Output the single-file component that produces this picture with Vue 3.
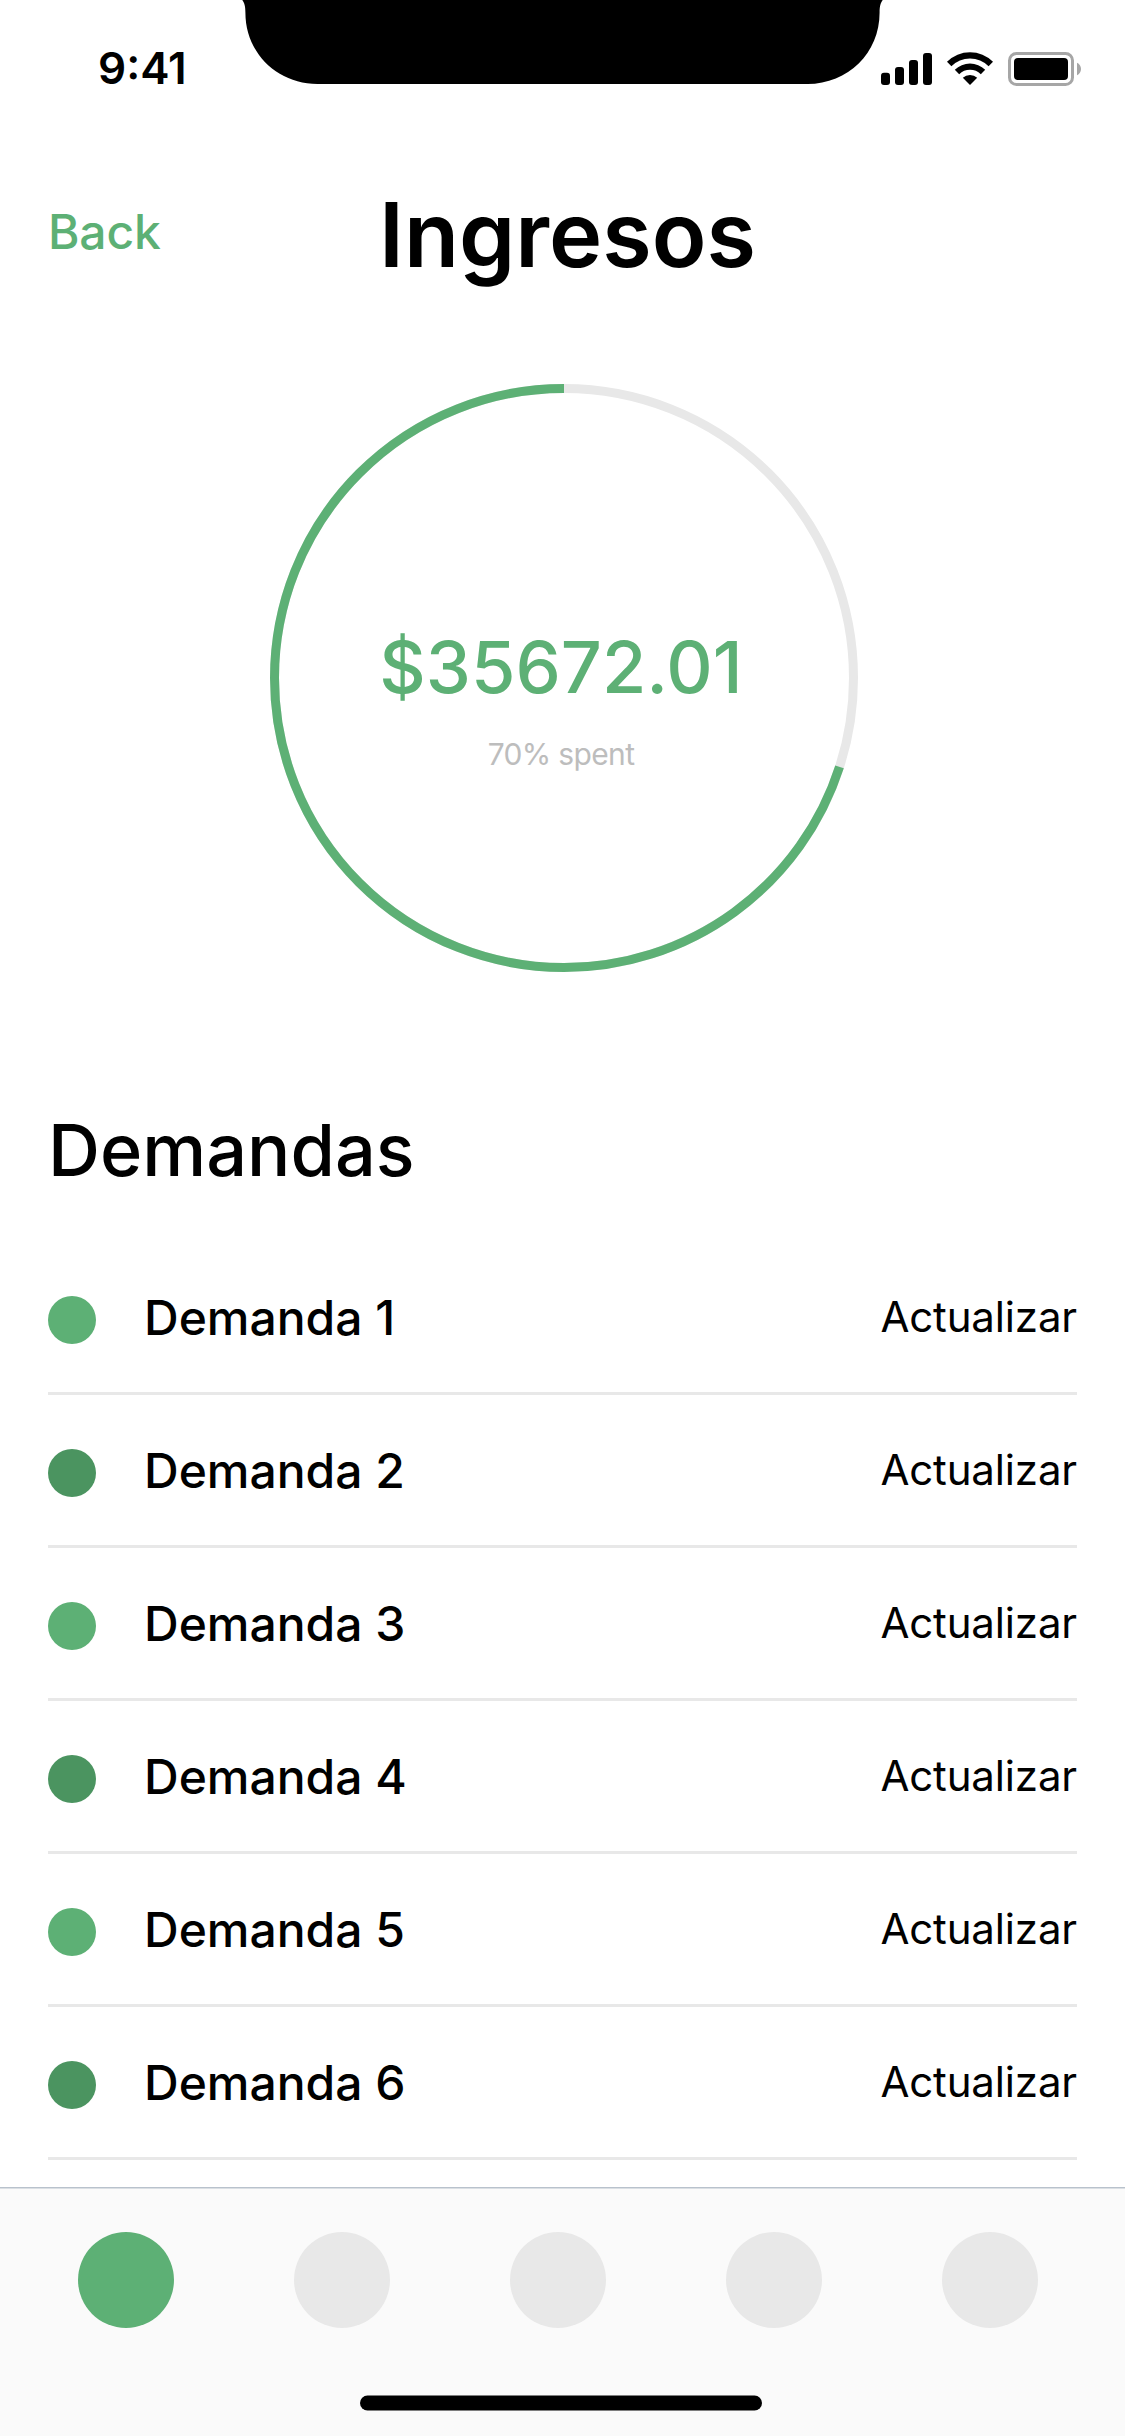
<script setup>
const demands = [1, 2, 3, 4, 5, 6].map((n) => ({ id: n, name: `Demanda ${n}`, dark: n % 2 === 0 }))
const tabs = [0, 1, 2, 3, 4]
const activeTab = 0

const spent = 70
const radius = 289.5
const circumference = 2 * Math.PI * radius
const dash = `${(circumference * spent) / 100} ${circumference}`
</script>

<template>
  <div class="screen">
    <header class="status">
      <svg class="notch" width="645" height="84" viewBox="240 0 645 84">
        <path d="M242.3 0C244.6 3 245.4 6.5 245.4 12.5C245.4 53 277 84 317.5 84H807.5C848 84 879.6 53 879.6 12.5C879.6 6.5 880.4 3 882.7 0Z" />
      </svg>
      <span class="time">9:41</span>
      <svg class="indicators" width="202" height="36" viewBox="880 51 202 36">
        <rect x="881" y="72.7" width="9" height="12.3" rx="3" />
        <rect x="895" y="67" width="9" height="18" rx="3" />
        <rect x="909" y="60" width="9" height="25" rx="3" />
        <rect x="923" y="53" width="9" height="32" rx="3" />
        <path d="M947 61.8A32.5 32.5 0 0 1 993 61.8L988.6 66.3A26.3 26.3 0 0 0 951.4 66.3Z" />
        <path d="M954.8 69.8A21.6 21.6 0 0 1 985.2 69.8L980.8 74.2A15.4 15.4 0 0 0 959.2 74.2Z" />
        <path d="M962.8 77.8A10.5 10.5 0 0 1 977.2 77.8L970 85Z" />
        <rect class="shell" x="1009.5" y="53.5" width="63" height="31" rx="7" />
        <rect x="1014" y="58" width="54" height="22" rx="4" />
        <path class="cap" d="M1077 62.8C1079.4 63.8 1081 66.2 1081 69C1081 71.8 1079.4 74.2 1077 75.2Z" />
      </svg>
    </header>

    <nav class="nav">
      <a class="back">Back</a>
      <h1 class="title">Ingresos</h1>
    </nav>

    <section class="gauge">
      <svg class="ring" width="588" height="588" viewBox="0 0 588 588">
        <circle class="track" cx="294" cy="294" :r="radius" />
        <circle class="progress" cx="294" cy="294" :r="radius" :stroke-dasharray="dash" transform="matrix(0 -1 -1 0 588 588)" />
      </svg>
      <div class="summary">
        <div class="amount">$35672.01</div>
        <div class="caption">{{ spent }}% spent</div>
      </div>
    </section>

    <main class="content">
      <h2 class="heading">Demandas</h2>
      <ul class="list">
        <li v-for="d in demands" :key="d.id" class="row">
          <span class="dot" :class="{ dark: d.dark }"></span>
          <span class="name">{{ d.name }}</span>
          <a class="update">Actualizar</a>
        </li>
      </ul>
    </main>

    <footer class="tabbar">
      <svg class="hairline" width="1125" height="2" viewBox="0 0 1125 2">
        <rect width="1125" height="1" fill="#b9c2cc" />
        <rect y="1" width="1125" height="1" fill="#dadfe4" />
      </svg>
      <div class="tabs">
        <span v-for="t in tabs" :key="t" class="tab" :class="{ active: t === activeTab }"></span>
      </div>
      <svg class="home" width="402" height="16" viewBox="0 0 402 16">
        <rect y="0.5" width="402" height="15" rx="7.5" />
      </svg>
    </footer>
  </div>
</template>

<style>
body {
  margin: 0;
  background: #fff;
}
</style>

<style scoped>
.screen {
  display: flex;
  flex-direction: column;
  width: 1125px;
  height: 2436px;
  overflow: hidden;
  background: #fff;
  color: #000;
  font-family: Inter, "Liberation Sans", sans-serif;
}
.status {
  position: relative;
  display: flex;
  justify-content: space-between;
  align-items: flex-start;
  box-sizing: border-box;
  height: 132px;
  padding: 41px 43px 0 98px;
}
.notch {
  position: absolute;
  top: 0;
  left: 240px;
}
.time {
  font-size: 44px;
  font-weight: 600;
  line-height: 54px;
}
.indicators {
  margin-top: 10px;
}
.shell {
  fill: none;
  stroke: #a6a6a6;
  stroke-width: 3;
}
.cap {
  fill: #a6a6a6;
}
.nav {
  display: grid;
  grid-template-columns: 1fr auto 1fr;
  align-items: start;
  height: 203px;
  padding: 49px 38px 0 48px;
}
.back {
  margin-top: 21px;
  color: #5db075;
  font-size: 48px;
  font-weight: 500;
  line-height: 60px;
  letter-spacing: -0.2px;
}
.title {
  margin: 0;
  font-size: 90px;
  font-weight: 600;
  line-height: 108px;
}
.gauge {
  display: grid;
  width: 588px;
  height: 588px;
  margin-left: 270px;
}
.ring,
.summary {
  grid-area: 1 / 1;
}
.ring circle {
  fill: none;
  stroke-width: 9;
}
.ring .track {
  stroke: #e8e8e8;
}
.ring .progress {
  stroke: #5db075;
}
.summary {
  padding: 239px 6px 0 0;
  text-align: center;
}
.amount {
  color: #5db075;
  font-size: 72px;
  font-weight: 500;
  line-height: 88px;
}
.caption {
  margin-top: 25px;
  color: #bdbdbd;
  font-size: 30px;
  line-height: 36px;
  letter-spacing: -0.65px;
}
.content {
  padding: 134px 48px 0;
}
.heading {
  margin: 0 0 48px;
  font-size: 72px;
  font-weight: 500;
  line-height: 88px;
}
.list {
  margin: 0;
  padding: 0;
  list-style: none;
}
.row {
  display: flex;
  align-items: flex-start;
  box-sizing: border-box;
  height: 153px;
  border-bottom: 3px solid #e8e8e8;
}
.dot {
  width: 48px;
  height: 48px;
  margin: 54px 48px 0 0;
  border-radius: 50%;
  background: #5db075;
}
.dot.dark {
  background: #4b9460;
}
.name {
  flex: 1;
  margin-top: 47px;
  font-size: 48px;
  font-weight: 500;
  line-height: 58px;
}
.update {
  margin-top: 49px;
  font-size: 42px;
  line-height: 52px;
  letter-spacing: -0.15px;
}
.tabbar {
  display: flex;
  flex-direction: column;
  align-items: center;
  height: 249px;
  margin-top: 27px;
  background: #fafafa;
}
.hairline {
  flex: none;
}
.tabs {
  display: flex;
  gap: 120px;
  margin: 43px 9px 67px 0;
}
.tab {
  width: 96px;
  height: 96px;
  border-radius: 50%;
  background: #e8e8e8;
}
.tab.active {
  background: #5db075;
}
.home {
  margin-right: 3px;
}
</style>
